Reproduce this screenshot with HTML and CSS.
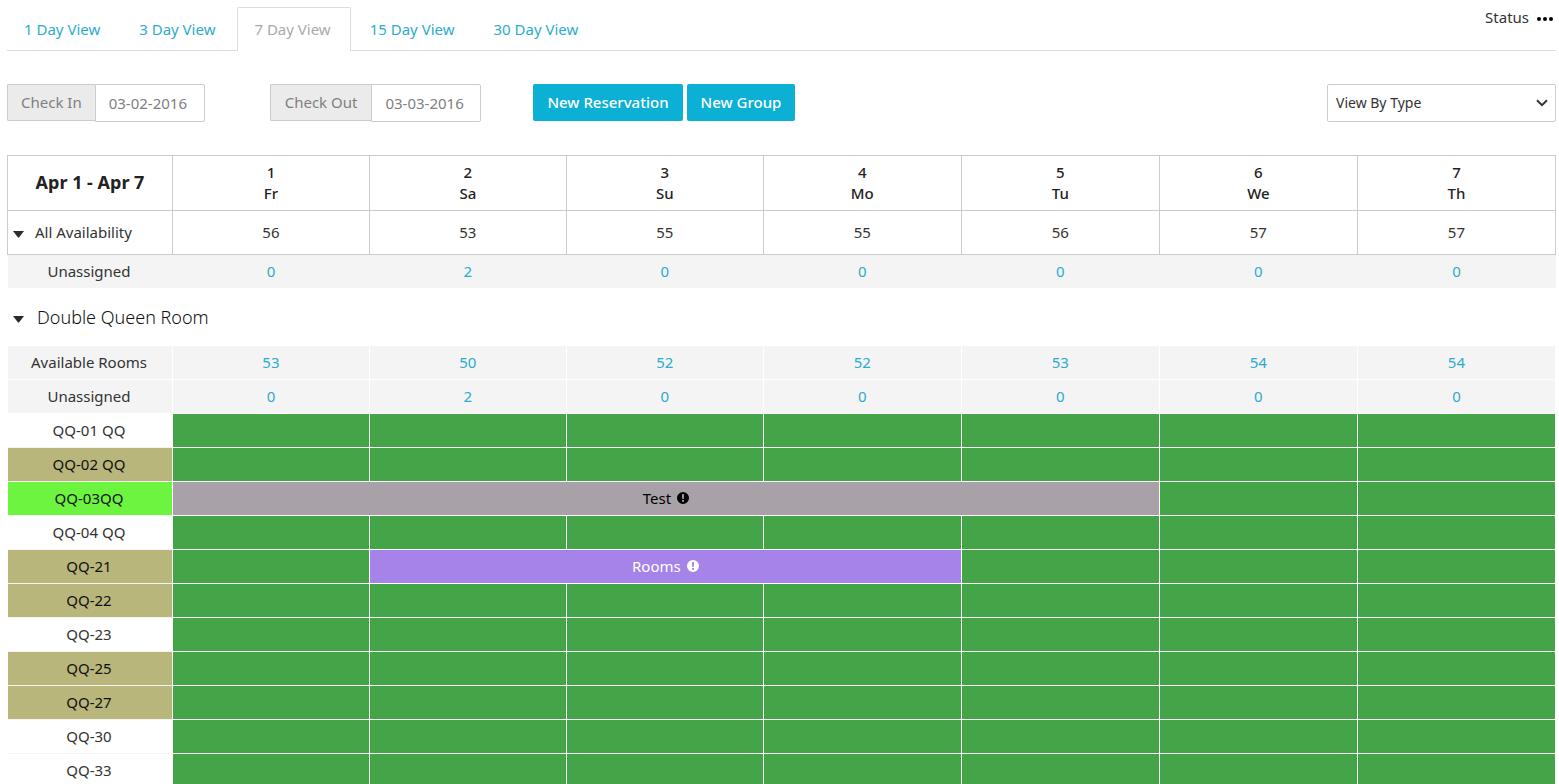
FILE: index.html
```
<!DOCTYPE html>
<html lang="en">
<head>
<meta charset="utf-8">
<title>Reservation Calendar</title>
<link rel="stylesheet" href="styles.css">
</head>
<body>
<header class="topbar">
  <nav class="tabs" aria-label="Calendar range">
    <a class="tab" href="#">1 Day View</a>
    <a class="tab" href="#">3 Day View</a>
    <a class="tab tab-active" href="#" aria-current="page">7 Day View</a>
    <a class="tab" href="#">15 Day View</a>
    <a class="tab" href="#">30 Day View</a>
  </nav>
  <button class="status" type="button">Status
    <svg class="dots" viewBox="0 0 16 6" aria-hidden="true"><circle cx="2" cy="3" r="2"/><circle cx="8" cy="3" r="2"/><circle cx="14" cy="3" r="2"/></svg>
  </button>
</header>

<form class="toolbar">
  <div class="field">
    <label class="field-label" for="check-in">Check In</label>
    <input class="field-input" id="check-in" type="text" value="03-02-2016">
  </div>
  <div class="field">
    <label class="field-label field-label-wide" for="check-out">Check Out</label>
    <input class="field-input" id="check-out" type="text" value="03-03-2016">
  </div>
  <div class="actions">
    <button class="primary" type="button">New Reservation</button>
    <button class="primary" type="button">New Group</button>
  </div>
  <div class="view-by">
    <select class="view-select" aria-label="View by"><option>View By Type</option></select>
    <svg class="chevron" viewBox="0 0 12 8" aria-hidden="true"><path d="M1 1.2 6 6.2 11 1.2"/></svg>
  </div>
</form>

<main>
  <table class="grid summary">
    <colgroup><col class="name-col"><col class="early-col" span="3"><col span="4"></colgroup>
    <thead>
      <tr><th class="range" scope="col">Apr 1 - Apr 7</th><th scope="col">1<br>Fr</th><th scope="col">2<br>Sa</th><th scope="col">3<br>Su</th><th scope="col">4<br>Mo</th><th scope="col">5<br>Tu</th><th scope="col">6<br>We</th><th scope="col">7<br>Th</th></tr>
    </thead>
    <tbody>
      <tr class="availability"><th scope="row"><button class="toggle" type="button"><svg class="caret" viewBox="0 0 11 7" aria-hidden="true"><path d="M0 0H11L6 6.5H5Z"/></svg>All Availability</button></th><td>56</td><td>53</td><td>55</td><td>55</td><td>56</td><td>57</td><td>57</td></tr>
      <tr class="counts"><th scope="row">Unassigned</th><td><a href="#">0</a></td><td><a href="#">2</a></td><td><a href="#">0</a></td><td><a href="#">0</a></td><td><a href="#">0</a></td><td><a href="#">0</a></td><td><a href="#">0</a></td></tr>
    </tbody>
  </table>

  <h2 class="room-type"><button class="toggle toggle-large" type="button"><svg class="caret" viewBox="0 0 11 7" aria-hidden="true"><path d="M0 0H11L6 6.5H5Z"/></svg>Double Queen Room</button></h2>

  <table class="grid rooms">
    <colgroup><col class="name-col"><col class="early-col" span="3"><col span="4"></colgroup>
    <tbody>
      <tr class="counts"><th scope="row">Available Rooms</th><td><a href="#">53</a></td><td><a href="#">50</a></td><td><a href="#">52</a></td><td><a href="#">52</a></td><td><a href="#">53</a></td><td><a href="#">54</a></td><td><a href="#">54</a></td></tr>
      <tr class="counts"><th scope="row">Unassigned</th><td><a href="#">0</a></td><td><a href="#">2</a></td><td><a href="#">0</a></td><td><a href="#">0</a></td><td><a href="#">0</a></td><td><a href="#">0</a></td><td><a href="#">0</a></td></tr>
      <tr class="room"><th scope="row">QQ-01 QQ</th><td></td><td></td><td></td><td></td><td></td><td></td><td></td></tr>
      <tr class="room dirty"><th scope="row">QQ-02 QQ</th><td></td><td></td><td></td><td></td><td></td><td></td><td></td></tr>
      <tr class="room ready"><th scope="row">QQ-03QQ</th><td class="booking booking-gray" colspan="5">Test <svg class="alert" viewBox="0 0 12 12" aria-hidden="true"><path fill-rule="evenodd" d="M6 0a6 6 0 1 1 0 12A6 6 0 0 1 6 0ZM5 2.2 5.2 7H6.8L7 2.2ZM5 8v1.8H7V8Z"/></svg></td><td></td><td></td></tr>
      <tr class="room"><th scope="row">QQ-04 QQ</th><td></td><td></td><td></td><td></td><td></td><td></td><td></td></tr>
      <tr class="room dirty"><th scope="row">QQ-21</th><td></td><td class="booking booking-purple" colspan="3">Rooms <svg class="alert" viewBox="0 0 12 12" aria-hidden="true"><path fill-rule="evenodd" d="M6 0a6 6 0 1 1 0 12A6 6 0 0 1 6 0ZM5 2.2 5.2 7H6.8L7 2.2ZM5 8v1.8H7V8Z"/></svg></td><td></td><td></td><td></td></tr>
      <tr class="room dirty"><th scope="row">QQ-22</th><td></td><td></td><td></td><td></td><td></td><td></td><td></td></tr>
      <tr class="room"><th scope="row">QQ-23</th><td></td><td></td><td></td><td></td><td></td><td></td><td></td></tr>
      <tr class="room dirty"><th scope="row">QQ-25</th><td></td><td></td><td></td><td></td><td></td><td></td><td></td></tr>
      <tr class="room dirty"><th scope="row">QQ-27</th><td></td><td></td><td></td><td></td><td></td><td></td><td></td></tr>
      <tr class="room"><th scope="row">QQ-30</th><td></td><td></td><td></td><td></td><td></td><td></td><td></td></tr>
      <tr class="room"><th scope="row">QQ-33</th><td></td><td></td><td></td><td></td><td></td><td></td><td></td></tr>
    </tbody>
  </table>
</main>
</body>
</html>
```
FILE: styles.css
```
* { box-sizing: border-box; }
html { scrollbar-width: none; }
body {
  margin: 0;
  padding: 7px 3px 0 7px;
  font-family: "Noto Sans", "Open Sans", sans-serif;
  font-size: 15px;
  font-weight: 400;
  line-height: 21px;
  color: #333;
  background: #fff;
}
button, input, select { font: inherit; color: inherit; }
button { cursor: pointer; }
a { color: #2cabd0; text-decoration: none; }

.topbar {
  display: flex;
  justify-content: space-between;
  align-items: flex-start;
  height: 44px;
  border-bottom: 1px solid #ddd;
}
.tabs { display: flex; gap: 2px; }
.tab {
  height: 44px;
  padding: 11px 19px 11px 16px;
  border: 1px solid transparent;
  border-bottom: 0;
}
.tab-active {
  color: #aaa;
  background: #fff;
  border-color: #ddd;
  border-radius: 2px 2px 0 0;
}
.status {
  display: flex;
  align-items: center;
  gap: 8px;
  padding: 0 3px 0 0;
  border: 0;
  background: none;
}
.dots { width: 16px; height: 6px; margin-top: 2px; }

.toolbar { display: flex; align-items: flex-start; margin: 33px 0; }
.field { display: flex; align-items: flex-start; margin-right: 65px; color: #808080; }
.field-label {
  height: 37px;
  padding: 7px 13px;
  border: 1px solid #ccc;
  border-right: 0;
  border-radius: 2px 0 0 2px;
  background: #ebebeb;
}
.field-label-wide { padding: 7px 14px; }
.field-input {
  width: 110px;
  height: 38px;
  padding: 0 13px;
  border: 1px solid #ccc;
  border-radius: 0 2px 2px 0;
  background: #fff;
}
.actions { display: flex; gap: 4px; margin-right: auto; margin-left: -13px; }
.primary {
  height: 37px;
  padding: 0 14px;
  border: 0;
  border-radius: 2px;
  background: #0bb0d4;
  color: #fff;
  font-weight: 500;
}
.view-by { display: grid; align-items: center; width: 229px; font-size: 14px; }
.view-select {
  grid-area: 1 / 1;
  appearance: none;
  width: 100%;
  height: 38px;
  padding: 0 8px 2px;
  border: 1px solid #ccc;
  border-radius: 2px;
  background: #fff;
}
.chevron {
  grid-area: 1 / 1;
  justify-self: end;
  width: 12px;
  height: 8px;
  margin-right: 8px;
  fill: none;
  stroke: #333;
  stroke-width: 2;
  pointer-events: none;
}

.grid { width: 100%; table-layout: fixed; border-collapse: collapse; text-align: center; }
.name-col { width: 165px; }
.early-col { width: 12.72%; }
.grid th, .grid td { padding: 0; font-weight: 400; }
.grid tbody th { padding-right: 2px; }
.grid.summary thead th { height: 55px; border: 1px solid #ccc; font-weight: 500; color: #222; }
.grid.summary thead .range { padding-bottom: 2px; font-size: 18px; font-weight: 700; }
.availability th, .availability td { height: 44px; border: 1px solid #ccc; }
.counts { background: #f4f4f4; }
.summary .counts th, .summary .counts td { height: 33px; }

.toggle {
  display: flex;
  align-items: center;
  gap: 11px;
  padding: 0 5px;
  border: 0;
  background: none;
}
.toggle-large { gap: 13px; padding: 0 6px; font-size: 18px; }
.caret { width: 11px; height: 7px; margin-top: 3px; fill: #2b2b2b; }
.room-type { display: flex; align-items: center; height: 57px; margin: 0; padding-top: 3px; font-weight: 300; color: #111; }

.rooms th, .rooms td { height: 34px; border: 1px solid #fff; }
.room th { border-bottom-color: #f4f4f4; }
.room td { background: #43a547; }
.dirty th { background: #b8b67b; color: #111; }
.ready th { background: #6cf441; color: #111; }
.room .booking-gray { background: #a8a2a8; color: #000; }
.room .booking-purple { background: #a583e8; color: #fff; }
.alert { width: 12px; height: 12px; margin-left: 2px; fill: currentColor; }
```
